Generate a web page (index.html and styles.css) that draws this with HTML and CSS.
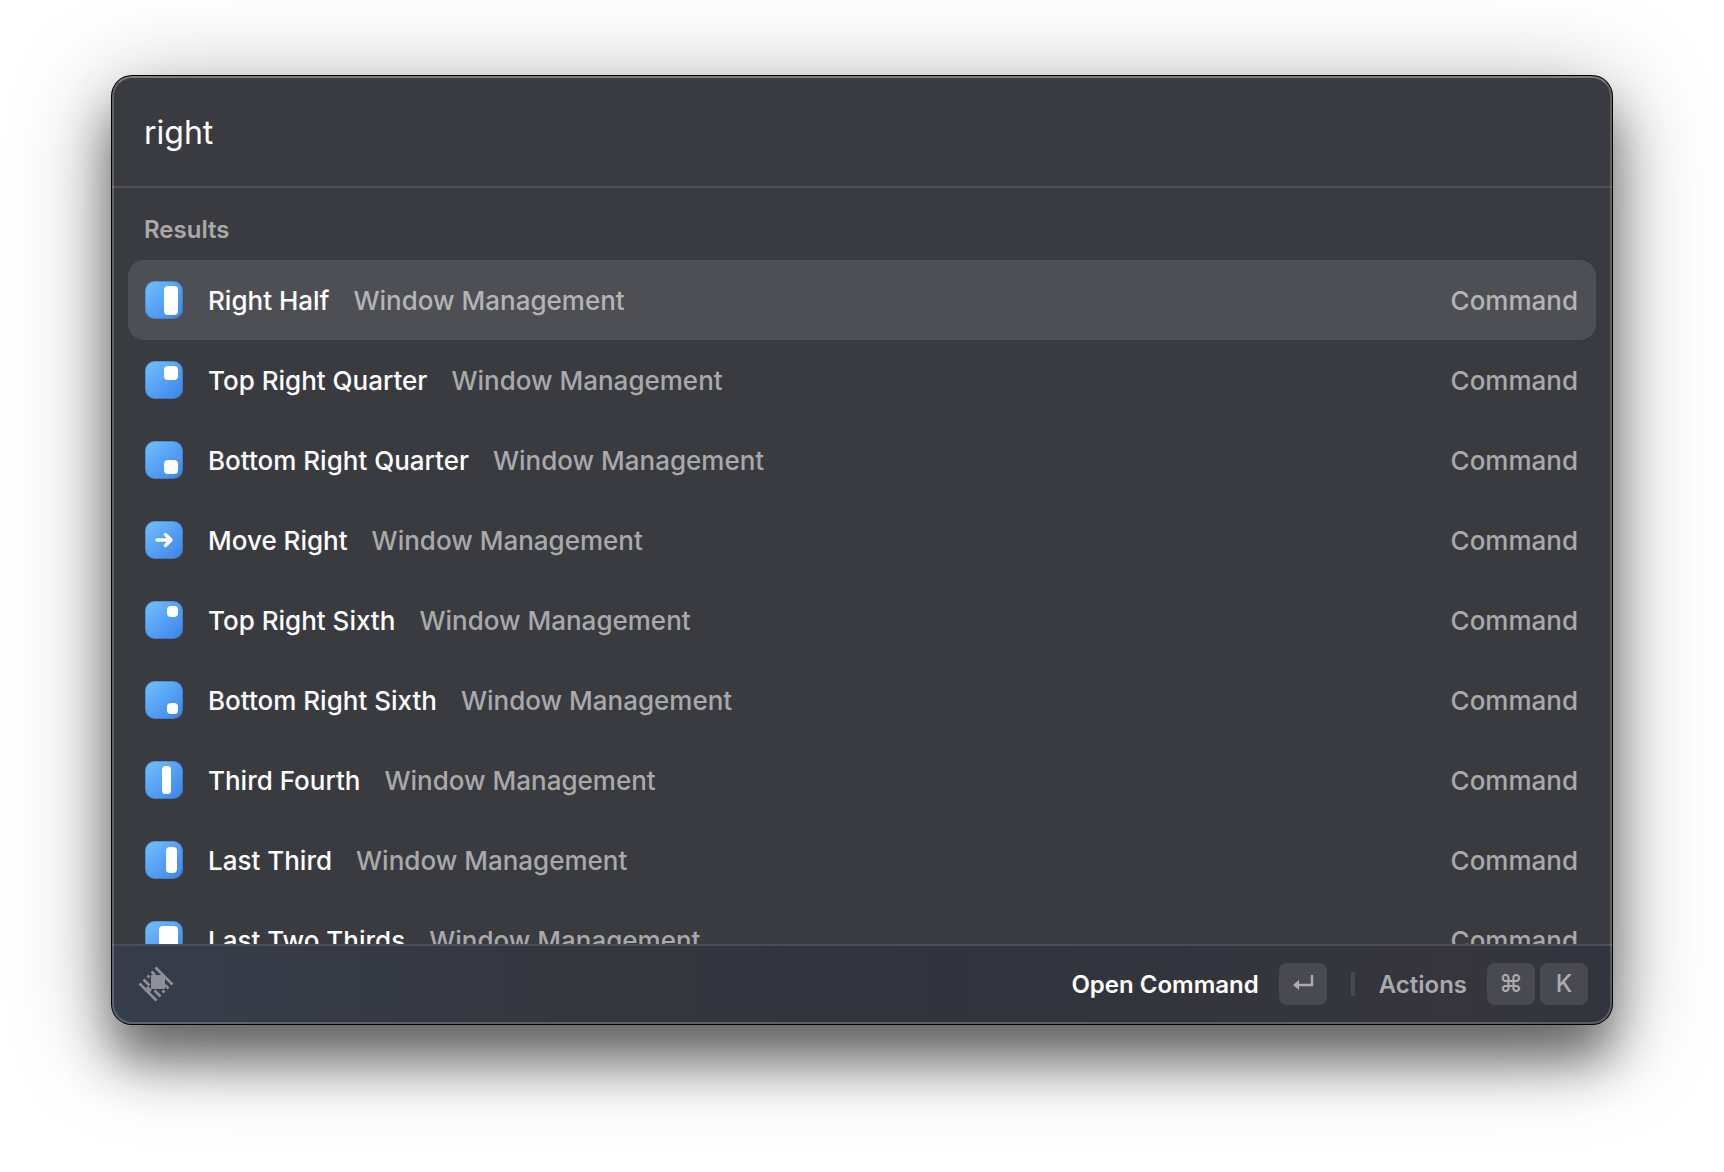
FILE: index.html
```html
<!DOCTYPE html>
<html lang="en">
<head>
<meta charset="utf-8">
<title>Command search</title>
<link rel="stylesheet" href="styles.css">
</head>
<body>
<svg class="defs" aria-hidden="true">
  <defs>
    <linearGradient id="blue" x1="0" y1="0" x2="1" y2="1">
      <stop offset="0" stop-color="#73c2fc"/>
      <stop offset="1" stop-color="#3a82ea"/>
    </linearGradient>
    <symbol id="tile" viewBox="0 0 40 40">
      <rect x="1" y="1" width="38" height="38" rx="10" fill="url(#blue)"/>
      <rect x="1.500" y="1.500" width="37" height="37" rx="9.500" fill="none" stroke="#3a5f96" stroke-opacity=".4"/>
    </symbol>
  </defs>
</svg>
<main class="window">
  <header class="search">
    <input class="search-input" type="text" value="right" aria-label="Search for commands">
  </header>
  <section class="results">
    <h2 class="results-title">Results</h2>
    <ul class="list">
      <li><button class="row selected"><svg class="icon" viewBox="0 0 40 40"><use href="#tile"/><rect x="20" y="6" width="14" height="29" rx="4" fill="#fff"/></svg><span class="name">Right Half</span><span class="sub">Window Management</span><span class="kind">Command</span></button></li>
      <li><button class="row"><svg class="icon" viewBox="0 0 40 40"><use href="#tile"/><rect x="20" y="6" width="14" height="14" rx="4" fill="#fff"/></svg><span class="name">Top Right Quarter</span><span class="sub">Window Management</span><span class="kind">Command</span></button></li>
      <li><button class="row"><svg class="icon" viewBox="0 0 40 40"><use href="#tile"/><rect x="20" y="20" width="14" height="14" rx="4" fill="#fff"/></svg><span class="name">Bottom Right Quarter</span><span class="sub">Window Management</span><span class="kind">Command</span></button></li>
      <li><button class="row"><svg class="icon" viewBox="0 0 40 40"><use href="#tile"/><path d="M13 20H27M21.500 14.500L27 20L21.500 25.500" fill="none" stroke="#fff" stroke-width="3.400" stroke-linecap="round" stroke-linejoin="round"/></svg><span class="name">Move Right</span><span class="sub">Window Management</span><span class="kind">Command</span></button></li>
      <li><button class="row"><svg class="icon" viewBox="0 0 40 40"><use href="#tile"/><rect x="23" y="6" width="11" height="11" rx="4" fill="#fff"/></svg><span class="name">Top Right Sixth</span><span class="sub">Window Management</span><span class="kind">Command</span></button></li>
      <li><button class="row"><svg class="icon" viewBox="0 0 40 40"><use href="#tile"/><rect x="23" y="23" width="11" height="11" rx="4" fill="#fff"/></svg><span class="name">Bottom Right Sixth</span><span class="sub">Window Management</span><span class="kind">Command</span></button></li>
      <li><button class="row"><svg class="icon" viewBox="0 0 40 40"><use href="#tile"/><rect x="18" y="6" width="9" height="28" rx="3.500" fill="#fff"/></svg><span class="name">Third Fourth</span><span class="sub">Window Management</span><span class="kind">Command</span></button></li>
      <li><button class="row"><svg class="icon" viewBox="0 0 40 40"><use href="#tile"/><rect x="22" y="7" width="11" height="26" rx="4" fill="#fff"/></svg><span class="name">Last Third</span><span class="sub">Window Management</span><span class="kind">Command</span></button></li>
      <li><button class="row"><svg class="icon" viewBox="0 0 40 40"><use href="#tile"/><rect x="15" y="6" width="19" height="28" rx="4" fill="#fff"/></svg><span class="name">Last Two Thirds</span><span class="sub">Window Management</span><span class="kind">Command</span></button></li>
    </ul>
  </section>
  <footer class="bar">
    <svg class="logo" viewBox="0 0 36 36" fill="none" stroke="#8d9099" stroke-width="2.600">
      <path d="M13 9h14v14H13z" fill="#8d9099" stroke="none"/>
      <path d="M17.500 1.500L34.500 18.500M1.500 17.500L18.500 34.500M13.500 5.500L17 9M9.500 9.500L11.500 11.500M5.500 13.500L11.500 19.500M27 19L30.500 22.500M24.500 24.500L26.500 26.500M16.500 24.500L22.500 30.500M9 21L13 25"/>
    </svg>
    <button class="action primary"><span class="label">Open Command</span>
      <kbd class="key"><svg class="glyph" viewBox="0 0 24 24"><path d="M21 3V13H6" fill="none" stroke="currentColor" stroke-width="2.400"/><path d="M2 13L8 8V18Z" fill="currentColor"/></svg></kbd>
    </button>
    <span class="divider"></span>
    <button class="action"><span class="label">Actions</span>
      <span class="keys"><kbd class="key">⌘</kbd><kbd class="key">K</kbd></span>
    </button>
  </footer>
</main>
</body>
</html>
```
FILE: styles.css
```css
* { box-sizing: border-box; }

body {
  margin: 0;
  padding: 76px 112px 148px;
  background: #fff;
  color: #fff;
  font-family: Inter, "Liberation Sans", sans-serif;
}

.defs { position: absolute; width: 0; height: 0; }

.window {
  display: flex;
  flex-direction: column;
  position: relative;
  height: calc(100vh - 224px);
  min-height: 480px;
  border-radius: 20px;
  background: #3a3b40;
  box-shadow: 0 0 0 1px #000, 0 36px 50px rgba(0, 0, 0, .48), 0 18px 100px rgba(0, 0, 0, .36);
  overflow: hidden;
}

/* light rim drawn over the content */
.window::after {
  content: "";
  position: absolute;
  inset: 0;
  border: 2px solid rgba(255, 255, 255, .2);
  border-top-color: rgba(255, 255, 255, .34);
  border-radius: 20px;
  pointer-events: none;
}

.search {
  flex: none;
  height: 112px;
  padding: 0 32px;
  border-bottom: 2px solid #505157;
}

.search-input {
  width: 100%;
  height: 110px;
  padding: 2px 0 0;
  border: 0;
  outline: 0;
  background: none;
  color: #fff;
  font: 400 32px/40px Inter, "Liberation Sans", sans-serif;
}

.results {
  flex: 1;
  min-height: 0;
  padding: 0 16px;
  overflow: hidden;
}

.results-title {
  height: 72px;
  margin: 0;
  padding: 26px 16px 0;
  color: #a9a9ab;
  font-size: 24px;
  font-weight: 600;
  line-height: 32px;
}

.list { margin: 0; padding: 0; list-style: none; }

.row {
  display: flex;
  align-items: center;
  gap: 24px;
  width: 100%;
  height: 80px;
  padding: 0 18px 0 16px;
  border: 0;
  border-radius: 16px;
  background: none;
  color: #a9a9ab;
  font: 500 26px/32px Inter, "Liberation Sans", sans-serif;
  text-align: left;
}

.row.selected { background: #4e4f54; color: #b4b4b6; }
.icon { flex: none; width: 40px; height: 40px; }
.name, .sub, .kind, .label { padding-top: 2px; }
.name { color: #fff; }
.kind { margin-left: auto; }

.bar {
  display: flex;
  flex: none;
  align-items: center;
  height: 80px;
  padding: 0 24px 2px 26px;
  border-top: 2px solid #4b4e57;
  background: linear-gradient(90deg, #363d4b 0, #35373f 30%, #31343d 55%, #36353e 90%, #32343d 100%);
}

.logo { width: 36px; height: 36px; margin-right: auto; }

.action {
  display: flex;
  align-items: center;
  gap: 20px;
  padding: 0;
  border: 0;
  background: none;
  color: #a9a9ae;
  font: 600 24px/32px Inter, "Liberation Sans", sans-serif;
}

.primary { color: #fff; }
.keys { display: flex; gap: 5px; }

.key {
  display: flex;
  align-items: center;
  justify-content: center;
  width: 48px;
  height: 42px;
  border-radius: 8px;
  background: #494951;
  color: #acacb0;
  font: 500 24px/32px Inter, "Liberation Sans", sans-serif;
}

.glyph { width: 24px; height: 24px; }
.divider { width: 4px; height: 24px; margin: 0 24px; border-radius: 2px; background: #484a52; }
```
